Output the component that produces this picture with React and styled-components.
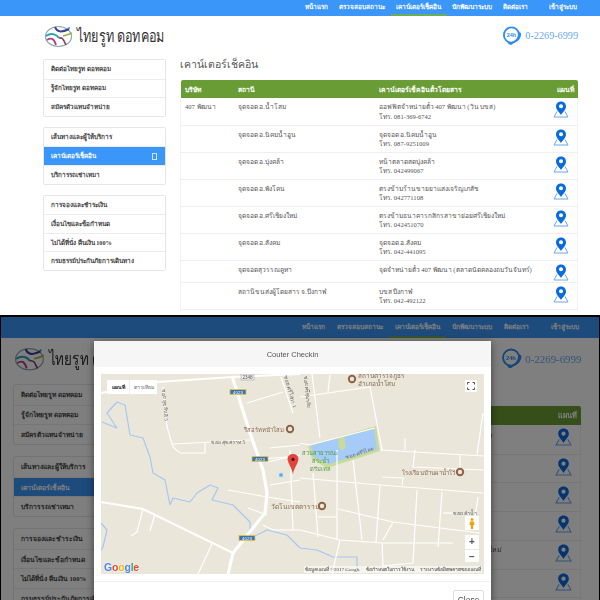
import React from "react";
import styled, { createGlobalStyle } from "styled-components";

const GlobalStyle = createGlobalStyle`
  html, body {
    margin: 0;
    padding: 0;
    background: #000;
  }
  body {
    font-family: "Liberation Serif", "Noto Sans", sans-serif;
  }
`;

const Screen = styled.div`
  width: 600px;
  height: 600px;
  display: flex;
  flex-direction: column;
  gap: 2px;
  overflow: hidden;
  filter: blur(0.4px);
`;

const Shot = styled.section`
  position: relative;
  height: ${(p) => p.$height}px;
  margin: 0 ${(p) => p.$side}px;
  background: #fff;
  overflow: hidden;
`;

const Page = styled.div`
  zoom: ${(p) => p.$zoom};
`;

const NavBar = styled.nav`
  height: ${(p) => p.$height}px;
  background: #3a96f8;
  display: flex;
  justify-content: flex-end;
  padding-right: ${(p) => p.$right}px;
`;

const NavItem = styled.a`
  display: flex;
  align-items: center;
  padding: 0 ${(p) => p.$pad}px;
  margin-left: ${(p) => (p.$push ? 10 : 0)}px;
  color: #fff;
  font-size: ${(p) => p.$font}px;
  font-weight: 700;
  white-space: nowrap;
  box-sizing: border-box;
  border-bottom: 2px solid ${(p) => (p.$active ? "#6cae55" : "transparent")};
`;

const Container = styled.div`
  width: ${(p) => p.$width}px;
  margin-left: ${(p) => p.$left}px;
`;

const Header = styled.header`
  height: 43px;
  display: flex;
  justify-content: space-between;
  align-items: center;
  padding-bottom: 4px;
  box-sizing: border-box;
`;

const Brand = styled.div`
  display: flex;
  align-items: center;
  gap: 3px;
  margin-left: 1px;
`;

const BrandName = styled.span`
  display: inline-block;
  font-family: "Noto Sans", "DejaVu Sans", sans-serif;
  font-size: 14px;
  color: #333;
  white-space: nowrap;
  line-height: 24px;
  transform: scale(0.9, 1.2);
  transform-origin: left center;
`;

const Hotline = styled.div`
  display: flex;
  align-items: center;
  gap: 3px;
`;

const HotlineNumber = styled.span`
  font-size: 10.2px;
  color: #67a8f5;
  white-space: nowrap;
`;

const Columns = styled.div`
  display: flex;
  gap: 14px;
  align-items: flex-start;
`;

const Sidebar = styled.aside`
  width: 123px;
  flex: none;
  display: flex;
  flex-direction: column;
  gap: 10px;
`;

const MenuGroup = styled.div`
  border: 1px solid #e6e6e6;
  border-radius: 2px;
  overflow: hidden;
`;

const MenuItem = styled.div`
  height: 18.6px;
  display: flex;
  align-items: center;
  justify-content: space-between;
  padding: 0 7px;
  box-sizing: border-box;
  font-size: 6.3px;
  font-weight: 700;
  white-space: nowrap;
  color: ${(p) => (p.$active ? "#fff" : "#444")};
  background: ${(p) => (p.$active ? "#3a96f8" : "#fff")};
  & + & {
    border-top: 1px solid #ececec;
  }
`;

const MissingGlyph = styled.i`
  width: 3px;
  height: 5px;
  margin-right: 1px;
  border: 1px solid #cfe4fd;
`;

const Main = styled.main`
  flex: 1;
  min-width: 0;
`;

const Title = styled.h1`
  margin: 0;
  height: 21px;
  font-size: 10.5px;
  line-height: 12px;
  font-weight: 400;
  color: #555;
  white-space: nowrap;
`;

const Table = styled.table`
  width: 100%;
  table-layout: fixed;
  border-collapse: collapse;
  font-size: 6.6px;
  color: #555;
`;

const HeadCell = styled.th`
  height: 18px;
  padding: 0 4px;
  background: #6a9c35;
  color: #fff;
  font-size: 6.8px;
  font-weight: 700;
  white-space: nowrap;
  text-align: ${(p) => p.$align || "left"};
  &:first-child {
    border-radius: 2px 0 0 0;
  }
  &:last-child {
    border-radius: 0 2px 0 0;
  }
`;

const Row = styled.tr`
  height: ${(p) => p.$height}px;
  border-bottom: 1px solid #efefef;
  border-left: 1px solid #f2f2f2;
  border-right: 1px solid #f2f2f2;
`;

const Cell = styled.td`
  padding: 4px 4px 0;
  vertical-align: top;
  line-height: 9.5px;
  white-space: nowrap;
  overflow: visible;
`;

const MapCell = styled.td`
  padding: 3px 0 0;
  vertical-align: top;
  text-align: center;
  line-height: 0;
`;

const Overlay = styled.div`
  position: absolute;
  inset: 0;
  background: rgba(0, 0, 0, 0.5);
`;

const Modal = styled.div`
  position: absolute;
  left: 93px;
  top: 24px;
  width: 397px;
  background: #fff;
  box-shadow: 0 2px 8px rgba(0, 0, 0, 0.5);
`;

const ModalHeader = styled.div`
  height: 26px;
  display: flex;
  align-items: center;
  justify-content: center;
  background: #f6f6f6;
  font-family: "Liberation Sans", sans-serif;
  font-size: 7.5px;
  color: #555;
`;

const ModalBody = styled.div`
  padding: 7px;
  border-bottom: 1px solid #f0f0f0;
`;

const ModalFooter = styled.div`
  display: flex;
  justify-content: flex-end;
  padding: 8px 7px;
`;

const CloseButton = styled.button`
  width: 31px;
  height: 20px;
  padding: 0;
  background: #fff;
  border: 1px solid #ddd;
  border-radius: 2px;
  font-family: "Liberation Sans", sans-serif;
  font-size: 8.5px;
  color: #444;
`;

const MapFrame = styled.div`
  position: relative;
  height: 200px;
  background: #eae6da;
  overflow: hidden;
`;

const MapSvg = styled.svg`
  display: block;
  width: 383px;
  height: 200px;
`;

const MapTypes = styled.div`
  position: absolute;
  left: 6px;
  top: 6px;
  width: 50px;
  height: 14px;
  display: flex;
  background: #fff;
  font-size: 5.2px;
  color: #666;
`;

const MapType = styled.span`
  display: flex;
  align-items: center;
  justify-content: center;
  flex: ${(p) => (p.$active ? "0 0 22px" : 1)};
  font-weight: ${(p) => (p.$active ? 700 : 400)};
  color: ${(p) => (p.$active ? "#222" : "#666")};
  border-left: ${(p) => (p.$active ? "none" : "1px solid #eee")};
`;

const MapButton = styled.div`
  position: absolute;
  right: ${(p) => p.$right}px;
  top: ${(p) => p.$top}px;
  width: ${(p) => p.$size}px;
  height: ${(p) => p.$size}px;
  background: #fff;
  display: flex;
  align-items: center;
  justify-content: center;
`;

const ZoomControl = styled.div`
  position: absolute;
  right: 5px;
  top: 161px;
  width: 14px;
  height: 27px;
  background: #fff;
  display: grid;
  grid-template-rows: 1fr 1fr;
  font-family: "Liberation Sans", sans-serif;
  font-size: 10px;
  font-weight: 700;
  line-height: 13px;
  text-align: center;
  color: #555;
  & > span {
    overflow: hidden;
  }
  & > span + span {
    border-top: 1px solid #e6e6e6;
  }
`;

const GoogleMark = styled.div`
  position: absolute;
  left: 3px;
  bottom: 1px;
  font-family: "Liberation Sans", sans-serif;
  font-size: 10.5px;
  font-weight: 700;
  letter-spacing: -0.2px;
  text-shadow: 0 0 2px #fff;
`;

const GoogleLetter = styled.span`
  color: ${(p) => p.$color};
`;

const Attribution = styled.div`
  position: absolute;
  right: 2px;
  bottom: 1px;
  display: flex;
  gap: 6px;
  padding: 0 1px;
  background: rgba(255, 255, 255, 0.55);
  font-size: 5px;
  line-height: 7px;
  color: #444;
  white-space: nowrap;
`;

const navLinks = [
  "หน้าแรก",
  "ตรวจสอบสถานะ",
  "เคาน์เตอร์เช็คอิน",
  "นักพัฒนาระบบ",
  "ติดต่อเรา",
];

const menuGroups = [
  ["ติดต่อไทยรูท ดอทคอม", "รู้จักไทยรูท ดอทคอม", "สมัครตัวแทนจำหน่าย"],
  ["เส้นทางและผู้ให้บริการ", "เคาน์เตอร์เช็คอิน", "บริการรถเช่าเหมา"],
  [
    "การจองและชำระเงิน",
    "เงื่อนไขและข้อกำหนด",
    "ไม่ได้ที่นั่ง คืนเงิน 100%",
    "กรมธรรม์ประกันภัยการเดินทาง",
  ],
];

const stops = [
  ["407 พัฒนา", "จุดจอด อ.น้ำโสม", "ออฟฟิตจำหน่ายตั๋ว 407 พัฒนา (วิน บขส)", "โทร. 081-369-6742"],
  ["", "จุดจอด อ.นิคมน้ำอูน", "จุดจอด อ.นิคมน้ำอูน", "โทร. 087-9251009"],
  ["", "จุดจอด อ.บุ่งคล้า", "หน้าตลาดสดบุ่งคล้า", "โทร. 042499067"],
  ["", "จุดจอด อ.พังโคน", "ตรงข้ามร้านขายยาแสงเจริญเภสัช", "โทร. 042771108"],
  ["", "จุดจอด อ.ศรีเชียงใหม่", "ตรงข้ามธนาคารกสิกรสาขาย่อยศรีเชียงใหม่", "โทร. 042451070"],
  ["", "จุดจอด อ.สังคม", "จุดจอด อ.สังคม", "โทร. 042-441095"],
  ["", "จุดจอดสุวรรณคูหา", "จุดจำหน่ายตั๋ว 407 พัฒนา (ตลาดนัดคลองถมวันจันทร์)", ""],
  ["", "สถานีขนส่งผู้โดยสาร จ.บึงกาฬ", "บขส บึงกาฬ", "โทร. 042-492122"],
];

// screen coordinates of the map, read off the reference
const thinRoads = [
  "M163 387 L167 427 L173 447 L180 453 L205 453 L205 443",
  "M173 444 L250 440",
  "M143 509 L137 532 L131 536",
  "M155 514 L150 531",
  "M212 544 L198 574",
  "M247 403 L283 392",
  "M270 448 L300 445",
  "M260 459 L287 457",
  "M281 377 L293 413",
  "M300 397 L370 387 L382 450",
  "M312 374 L320 438",
  "M330 375 L328 392",
  "M300 443 L310 445 L375 428",
  "M380 450 L484 456",
  "M405 438 L405 450",
  "M415 450 L413 467 L484 470",
  "M460 455 L460 468",
  "M483 413 L477 455",
  "M300 478 L380 485 L483 493",
  "M380 485 L376 542",
  "M417 490 L413 563 L383 566 L382 543",
  "M337 450 L337 540",
  "M353 460 L362 540",
  "M313 473 L318 537",
  "M338 509 L393 522 L480 533",
  "M300 530 L340 540 L383 543 L453 543",
  "M393 522 L383 540",
  "M442 492 L438 547",
  "M443 513 L453 513",
  "M340 540 L332 574",
  "M478 497 L475 517",
  "M318 517 L337 517",
  "M382 477 L403 478 L402 485",
  "M270 485 L300 480",
  "M228 490 L267 497 L300 502",
  "M248 508 L267 515",
  "M263 525 L273 530 L300 530",
  "M290 450 L293 530",
  "M267 462 L300 455",
];

const majorRoads = [
  "M101 393 L157 382 L233 377 L300 374",
  "M101 502 L143 509 L233 553",
];

const river = [
  "M102 422 L117 428 L107 413 L117 402 L125 405 L130 435 L143 438 L150 457",
  "L153 473 L165 480 L170 505 L173 498 L190 502 L197 493 L210 485 L218 488",
  "L212 500 L233 505 L250 522 L250 537 L257 535 L267 530 L287 535 L300 548",
  "L317 550 L333 557 L357 557 L357 567",
].join(" ");

const poiLabels = [
  { x: 244, y: 432, text: "รีสอร์ทหน้าโสม", size: 6 },
  { x: 358, y: 378, text: "สถานีตำรวจภูธร", size: 6.4 },
  { x: 358, y: 386, text: "อำเภอน้ำโสม", size: 6.4 },
  { x: 402, y: 475, text: "โรงเรียนบ้านผาน้ำโว้", size: 6 },
  { x: 271, y: 509, text: "วัดโนเขตตาราม", size: 6.6 },
];

const poiIcons = [
  [290, 429],
  [352, 379],
  [460, 472],
  [322, 506],
];

const routeShields = [
  [238, 392],
  [260, 459],
  [247, 538],
];

function Logo() {
  return (
    <svg width="30" height="24" viewBox="0 0 30 24">
      <ellipse cx="14.5" cy="12.5" rx="13" ry="10" fill="none" stroke="#8fa7b5" strokeWidth="1.2" />
      <path d="M2 12 C8 8 13 11 15 14" fill="none" stroke="#2ba3b5" strokeWidth="2" />
      <path d="M11 3 C13 8 17 9 25 5" fill="none" stroke="#3a3f98" strokeWidth="2" />
      <path d="M3 16 C8 13 10 15 12 21" fill="none" stroke="#b3407f" strokeWidth="1.8" />
      <path d="M15 14 C19 13 20 17 22 21" fill="none" stroke="#8a3f70" strokeWidth="1.6" />
      <path d="M19 12 C23 11 26 10 28 9" fill="none" stroke="#9ab13c" strokeWidth="1.6" />
      <circle cx="25" cy="4" r="1" fill="#2ba3b5" />
    </svg>
  );
}

function HotlineIcon() {
  return (
    <svg width="20" height="20" viewBox="0 0 20 20">
      <circle cx="9.5" cy="9" r="7.6" fill="none" stroke="#2f8df2" strokeWidth="1.8" />
      <path d="M16 5.5 L19 7 C19.6 11 17 15 13 16 L10 18.6 C8.5 19.4 6.5 18.5 5.5 16.2 C9 17 15 15 16 9 Z" fill="#2f8df2" />
      <text x="9.3" y="11" textAnchor="middle" fontFamily="Liberation Sans" fontSize="5.4" fontWeight="700" fill="#2f8df2">
        24h
      </text>
    </svg>
  );
}

function PinIcon() {
  return (
    <svg width="16" height="17" viewBox="0 0 16 17">
      <path d="M4 10.5 L1 16 L15 16 L12 10.5" fill="none" stroke="#69a6ee" strokeWidth="1" />
      <path d="M8 0.5 C4.8 0.5 3 2.8 3 5.4 C3 8.6 6.4 11.2 8 14 C9.6 11.2 13 8.6 13 5.4 C13 2.8 11.2 0.5 8 0.5 Z" fill="#0a6be0" />
      <circle cx="8" cy="5.3" r="2" fill="#fff" />
    </svg>
  );
}

function Site({ navHeight, navRight, navFont, navPad, zoom, left, width }) {
  return (
    <>
      <NavBar $height={navHeight} $right={navRight}>
        {navLinks.map((link) => (
          <NavItem key={link} $font={navFont} $pad={navPad} $active={link === "เคาน์เตอร์เช็คอิน"}>
            {link}
          </NavItem>
        ))}
        <NavItem $font={navFont} $pad={navPad} $push>
          เข้าสู่ระบบ
        </NavItem>
      </NavBar>
      <Page $zoom={zoom}>
        <Container $left={left} $width={width}>
          <Header>
            <Brand>
              <Logo />
              <BrandName>ไทยรูท ดอทคอม</BrandName>
            </Brand>
            <Hotline>
              <HotlineIcon />
              <HotlineNumber>0-2269-6999</HotlineNumber>
            </Hotline>
          </Header>
          <Columns>
            <Sidebar>
              {menuGroups.map((group) => (
                <MenuGroup key={group[0]}>
                  {group.map((item) => (
                    <MenuItem key={item} $active={item === "เคาน์เตอร์เช็คอิน"}>
                      {item}
                      {item === "เคาน์เตอร์เช็คอิน" && <MissingGlyph />}
                    </MenuItem>
                  ))}
                </MenuGroup>
              ))}
            </Sidebar>
            <Main>
              <Title>เคาน์เตอร์เช็คอิน</Title>
              <Table>
                <colgroup>
                  <col width="53" />
                  <col width="141" />
                  <col />
                  <col width="32" />
                </colgroup>
                <thead>
                  <tr>
                    <HeadCell>บริษัท</HeadCell>
                    <HeadCell>สถานี</HeadCell>
                    <HeadCell>เคาน์เตอร์เช็คอินตั๋วโดยสาร</HeadCell>
                    <HeadCell $align="right">แผนที่</HeadCell>
                  </tr>
                </thead>
                <tbody>
                  {stops.map(([company, station, counter, phone]) => (
                    <Row key={station} $height={phone ? 27 : 22}>
                      <Cell>{company}</Cell>
                      <Cell>{station}</Cell>
                      <Cell>
                        {counter}
                        {phone && <br />}
                        {phone}
                      </Cell>
                      <MapCell>
                        <PinIcon />
                      </MapCell>
                    </Row>
                  ))}
                </tbody>
              </Table>
            </Main>
          </Columns>
        </Container>
      </Page>
    </>
  );
}

function StreetMap() {
  return (
    <MapFrame>
      <MapSvg viewBox="101 374 383 200">
        <path d={river} fill="none" stroke="#a3c8f5" strokeWidth="1.2" strokeLinejoin="round" />
        <path d="M101 523 L107 530 L103 547 L101 550" fill="none" stroke="#a3c8f5" strokeWidth="1.2" strokeLinejoin="round" />
        <path d="M308 446 L376 426 L380 451 L327 468 L312 459 Z" fill="#c5dc9c" />
        <path d="M311 445 L374 429 L377 449 L329 464 L314 457 Z" fill="#a6cbf8" />
        <path d="M339 437 L344 436 L346 447 L342 451 L338 446 Z" fill="#c5dc9c" />
        {thinRoads.map((d) => (
          <path key={d} d={d} fill="none" stroke="#fff" strokeWidth="1.2" />
        ))}
        {majorRoads.map((d) => (
          <path key={d} d={d} fill="none" stroke="#fff" strokeWidth="2" />
        ))}
        <path d="M232 376 L250 433 L263 470 L267 493 L265 513 L233 553 L228 574" fill="none" stroke="#fff" strokeWidth="3.2" strokeLinejoin="round" />
        {poiLabels.map((label) => (
          <text key={label.text} x={label.x} y={label.y} fontSize={label.size} fill="#8a6a50">
            {label.text}
          </text>
        ))}
        {poiIcons.map(([x, y]) => (
          <g key={x}>
            <circle cx={x} cy={y} r="4.2" fill="#8f6345" />
            <circle cx={x} cy={y} r="2.2" fill="#efe7dc" />
          </g>
        ))}
        {routeShields.map(([x, y]) => (
          <g key={x}>
            <rect x={x - 8} y={y - 2.5} width="16" height="5" fill="#3f74a8" stroke="#e2c84e" strokeWidth="0.8" />
            <text x={x} y={y + 1.6} textAnchor="middle" fontFamily="Liberation Sans" fontSize="4.4" fill="#fff">
              4023
            </text>
          </g>
        ))}
        <rect x="241" y="374" width="13" height="6" fill="#eee" stroke="#999" strokeWidth="0.5" />
        <text x="247.5" y="379" textAnchor="middle" fontFamily="Liberation Sans" fontSize="4.6" fill="#555">
          2348
        </text>
        <text x="211" y="444" fontSize="5.2" fill="#666">ซอย สุขสวาท 5</text>
        <text x="453" y="515" fontSize="5.2" fill="#666">ซอย ลำน้ำ</text>
        <text transform="translate(162 389) rotate(85)" fontSize="5.2" fill="#666">ซอย สุขสันติ 5</text>
        <text transform="translate(284 376) rotate(74)" fontSize="5.2" fill="#666">ซอย ศรีโสภา 1</text>
        <text transform="translate(304 376) rotate(84)" fontSize="5.2" fill="#666">ซอย ศรีสุมาลัย</text>
        <text transform="translate(346 459) rotate(-17)" fontSize="5.2" fill="#666">ซอย ศรีวิไลย</text>
        <text x="320" y="455" textAnchor="middle" fontSize="5.8" fill="#4d9a3c">สวนสาธารณะ</text>
        <text x="320" y="463" textAnchor="middle" fontSize="5.8" fill="#4d9a3c">สระน้ำ</text>
        <text x="320" y="471" textAnchor="middle" fontSize="5.8" fill="#4d9a3c">ดรีมเทล</text>
        <rect x="279" y="473" width="4" height="4" fill="#5aa9e8" stroke="#cfe4f8" strokeWidth="0.8" />
        <path d="M293 454 C289.4 454 287.6 456.6 287.6 459 C287.6 463 291.6 467 293 474 C294.4 467 298.4 463 298.4 459 C298.4 456.6 296.6 454 293 454 Z" fill="#e2453c" />
        <circle cx="293" cy="459.4" r="1.6" fill="#511" />
      </MapSvg>
      <MapTypes>
        <MapType $active>แผนที่</MapType>
        <MapType>ดาวเทียม</MapType>
      </MapTypes>
      <MapButton $right={7} $top={6} $size={12}>
        <svg width="8" height="8" viewBox="0 0 8 8" fill="none" stroke="#555" strokeWidth="1">
          <path d="M0.5 2.5 V0.5 H2.5 M5.5 0.5 H7.5 V2.5 M7.5 5.5 V7.5 H5.5 M2.5 7.5 H0.5 V5.5" />
        </svg>
      </MapButton>
      <MapButton $right={5} $top={142} $size={14}>
        <svg width="6" height="11" viewBox="0 0 6 11">
          <circle cx="3" cy="1.6" r="1.5" fill="#e9a514" />
          <path d="M1 3.5 H5 L5.6 7 H4.4 L4 11 H2 L1.6 7 H0.4 Z" fill="#e9a514" />
        </svg>
      </MapButton>
      <ZoomControl>
        <span>+</span>
        <span>−</span>
      </ZoomControl>
      <GoogleMark>
        <GoogleLetter $color="#4a86e8">G</GoogleLetter>
        <GoogleLetter $color="#e0483b">o</GoogleLetter>
        <GoogleLetter $color="#f2b90f">o</GoogleLetter>
        <GoogleLetter $color="#4a86e8">g</GoogleLetter>
        <GoogleLetter $color="#3aa757">l</GoogleLetter>
        <GoogleLetter $color="#e0483b">e</GoogleLetter>
      </GoogleMark>
      <Attribution>
        <span>ข้อมูลแผนที่ ©2017 Google</span>
        <span>ข้อกำหนดในการใช้งาน</span>
        <span>รายงานข้อผิดพลาดของแผนที่</span>
      </Attribution>
    </MapFrame>
  );
}

export default function App() {
  return (
    <>
      <GlobalStyle />
      <Screen>
        <Shot $height={315} $side={0}>
          <Site navHeight={16} navRight={17.5} navFont={6.4} navPad={5.5} zoom={1} left={43} width={535} />
        </Shot>
        <Shot $height={283} $side={1}>
          <Site navHeight={21} navRight={14} navFont={6.5} navPad={6} zoom={1.065} left={11} width={534} />
          <Overlay />
          <Modal>
            <ModalHeader>Couter Checkin</ModalHeader>
            <ModalBody>
              <StreetMap />
            </ModalBody>
            <ModalFooter>
              <CloseButton>Close</CloseButton>
            </ModalFooter>
          </Modal>
        </Shot>
      </Screen>
    </>
  );
}
